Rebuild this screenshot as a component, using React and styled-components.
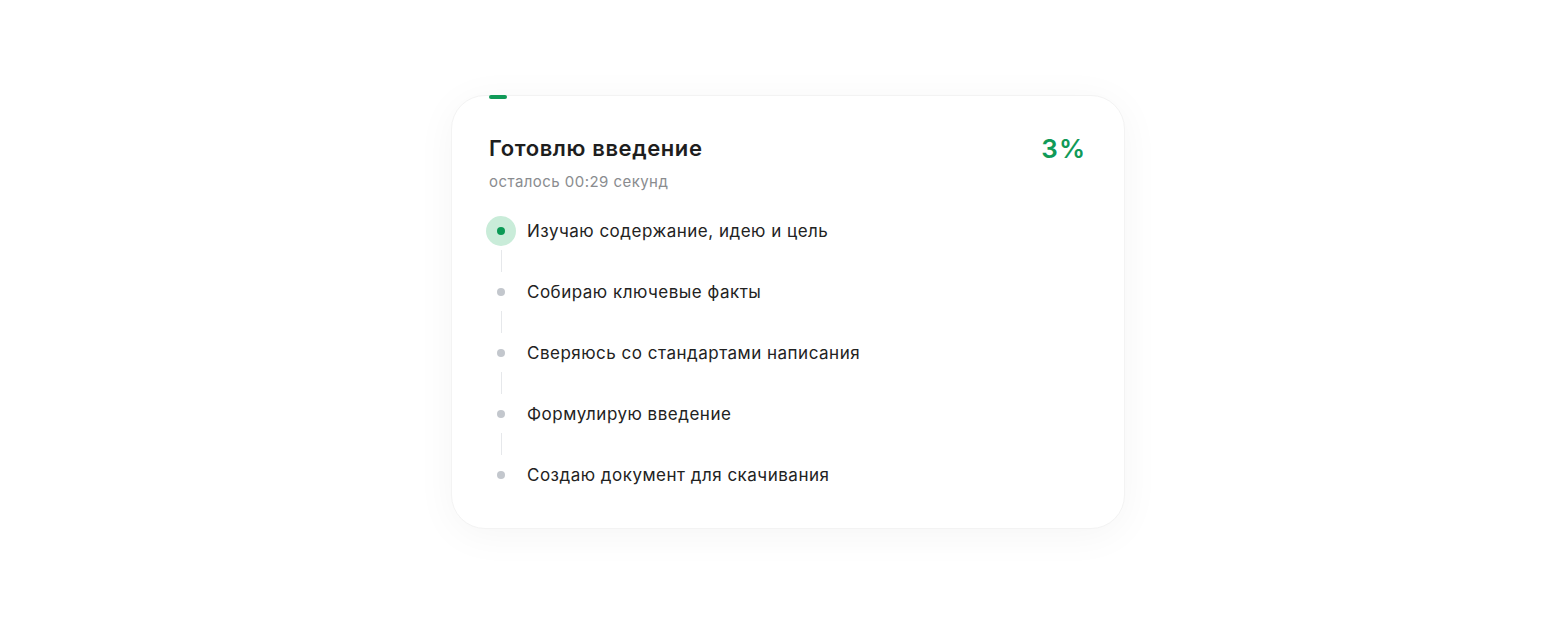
import React from "react";
import styled, { createGlobalStyle } from "styled-components";

const Global = createGlobalStyle`
  html, body { margin: 0; padding: 0; background: #ffffff; }
  body { font-family: Inter, "Noto Sans", sans-serif; -webkit-font-smoothing: antialiased; }
`;

const Page = styled.main`
  height: 626px;
  box-sizing: border-box;
  padding: 95px 0 0 16px;
  display: flex;
  justify-content: center;
  align-items: flex-start;
`;

const Card = styled.section`
  width: 674px;
  box-sizing: border-box;
  padding: 0 38px 38px 37px;
  background: #ffffff;
  border-radius: 34px;
  border: 1px solid #f3f3f3;
  box-shadow: 0 6px 40px rgba(0, 0, 0, 0.045);
`;

const Track = styled.div`
  height: 4px;
  margin-top: -1px;
`;

const Fill = styled.div`
  height: 4px;
  border-radius: 2px;
  background: #109a58;
`;

const Header = styled.header`
  margin-top: 35px;
  display: flex;
  justify-content: space-between;
  align-items: flex-start;
`;

const Titles = styled.div`
  display: flex;
  flex-direction: column;
  gap: 10px;
`;

const Title = styled.h1`
  margin: 0;
  font-size: 22px;
  line-height: 28px;
  font-weight: 600;
  color: #1e1e1e;
  letter-spacing: 0.6px;
`;

const Sub = styled.div`
  font-size: 15px;
  line-height: 20px;
  color: #8a8c8f;
  letter-spacing: 0.45px;
`;

const Percent = styled.div`
  font-size: 26px;
  line-height: 30px;
  font-weight: 600;
  color: #109a58;
  letter-spacing: 1px;
  margin-right: 0;
`;

const Steps = styled.ol`
  list-style: none;
  margin: 24px 0 0 -3px;
  padding: 0;
  display: flex;
  flex-direction: column;
`;

const Step = styled.li`
  display: flex;
  align-items: center;
  gap: 11px;
  height: 30px;
`;

const Marker = styled.span`
  width: 30px;
  height: 30px;
  flex: none;
  border-radius: 50%;
  display: flex;
  align-items: center;
  justify-content: center;
  background: ${(p) => (p.$active ? "#c9ecd9" : "transparent")};
  &::after {
    content: "";
    width: 8px;
    height: 8px;
    border-radius: 50%;
    background: ${(p) => (p.$active ? "#0a9a55" : "#c3c7cd")};
  }
`;

const Label = styled.span`
  font-size: 17px;
  line-height: 22px;
  color: #222222;
  letter-spacing: 0.5px;
`;

const Connector = styled.li`
  height: 31px;
  box-sizing: border-box;
  padding: 4px 0 5px 15px;
  &::before {
    content: "";
    display: block;
    width: 1px;
    height: 100%;
    background: #e6e8eb;
  }
`;

const steps = [
  "Изучаю содержание, идею и цель",
  "Собираю ключевые факты",
  "Сверяюсь со стандартами написания",
  "Формулирую введение",
  "Создаю документ для скачивания",
];

export default function App() {
  const progress = 3;
  return (
    <>
      <Global />
      <Page>
        <Card>
          <Track>
            <Fill style={{ width: `${progress}%` }} />
          </Track>
          <Header>
            <Titles>
              <Title>Готовлю введение</Title>
              <Sub>осталось 00:29 секунд</Sub>
            </Titles>
            <Percent>{progress}%</Percent>
          </Header>
          <Steps>
            {steps.map((s, i) => (
              <React.Fragment key={s}>
                {i > 0 && <Connector aria-hidden="true" />}
                <Step>
                  <Marker $active={i === 0} />
                  <Label>{s}</Label>
                </Step>
              </React.Fragment>
            ))}
          </Steps>
        </Card>
      </Page>
    </>
  );
}
